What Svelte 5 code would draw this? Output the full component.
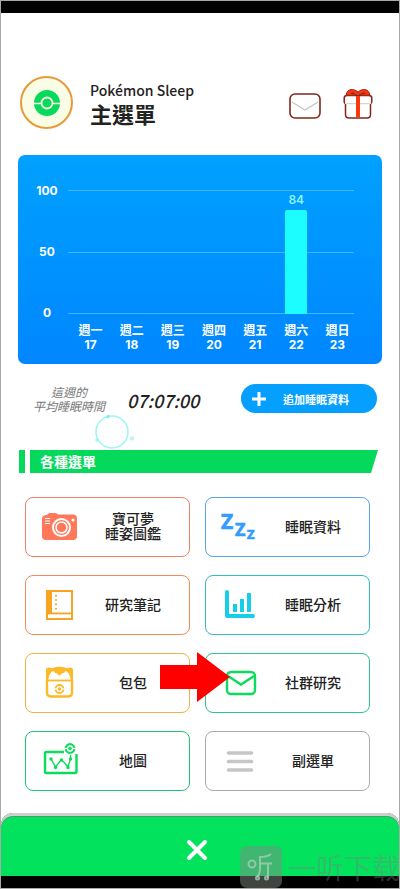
<script>
  const scale = [100, 50, 0];

  let days = [
    { name: '週一', date: 17, score: null },
    { name: '週二', date: 18, score: null },
    { name: '週三', date: 19, score: null },
    { name: '週四', date: 20, score: null },
    { name: '週五', date: 21, score: null },
    { name: '週六', date: 22, score: 84 },
    { name: '週日', date: 23, score: null }
  ];

  let averageTime = '07:07:00';

  const menu = [
    { id: 'dex', lines: ['寶可夢', '睡姿圖鑑'] },
    { id: 'data', lines: ['睡眠資料'] },
    { id: 'notes', lines: ['研究筆記'] },
    { id: 'analysis', lines: ['睡眠分析'] },
    { id: 'bag', lines: ['包包'] },
    { id: 'community', lines: ['社群研究'] },
    { id: 'map', lines: ['地圖'] },
    { id: 'sub', lines: ['副選單'] }
  ];
</script>

<div class="screen">
  <div class="system-bar"></div>

  <header>
    <div class="avatar">
      <svg width="28" height="28" viewBox="0 0 28 28">
        <circle cx="14" cy="14" r="13" fill="#08d95b" />
        <path d="M0 14.500h28" stroke="#fafde6" stroke-width="1.500" />
        <circle cx="14" cy="14" r="5.500" fill="#08d95b" stroke="#fafde6" stroke-width="1.800" />
      </svg>
    </div>
    <div class="titles">
      <p>Pokémon Sleep</p>
      <h1>主選單</h1>
    </div>
    <button class="icon-button" aria-label="Mail">
      <svg width="34" height="34" viewBox="0 0 34 34" fill="none">
        <rect x="2" y="6" width="30" height="24" rx="5" stroke="#80271c" stroke-width="1.6" />
        <path d="M4 14l13 8 13-8" stroke="#c8c4c2" stroke-width="1.3" />
      </svg>
    </button>
    <button class="icon-button" aria-label="Gifts">
      <svg width="34" height="34" viewBox="0 0 34 34" fill="none">
        <path d="M4.500 16v10.500q0 3.500 3.500 3.500h18q3.500 0 3.500-3.500V16" fill="#fff" stroke="#80271c" stroke-width="1.5" />
        <path d="M4 15.500q-.8-.5-.8-2V10q0-2.500 3-2.500h21.600q3 0 3 2.500v3.500q0 1.500-.8 2" fill="#fff" stroke="#80271c" stroke-width="1.5" />
        <path d="M4.500 15.700h25" stroke="#ccc" />
        <path d="M17 8v21" stroke="#fa380c" stroke-width="4" />
        <path d="M17 4C13 .5 6.500 0 5 7q6 1.500 12-1 6 2.500 12 1C27.500 0 21 .5 17 4z" fill="#fa380c" stroke="#a32612" />
        <path d="M9 5.500q3-2 5 0-2 1.500-5 0zM20 5.500q3-2 5 0-3 1.500-5 0z" fill="#8d2217" />
      </svg>
    </button>
  </header>

  <section class="chart">
    <div class="axis">
      {#each scale as value}
        <span>{value}</span>
      {/each}
    </div>
    <div class="plot">
      <div class="lines">
        {#each scale as value}
          <i></i>
        {/each}
      </div>
      <div class="bars">
        {#each days as day}
          <div class="slot">
            {#if day.score}
              <span>{day.score}</span>
              <div class="bar" style="height: {day.score}%"></div>
            {/if}
          </div>
        {/each}
      </div>
    </div>
    <div class="days">
      {#each days as day}
        <div>
          <span>{day.name}</span>
          <span>{day.date}</span>
        </div>
      {/each}
    </div>
  </section>

  <section class="summary">
    <p class="caption">這週的<br />平均睡眠時間</p>
    <strong>{averageTime}</strong>
    <button class="add">
      <svg width="14" height="14" viewBox="0 0 14 14">
        <path d="M7 0v14M0 7h14" stroke="#fff" stroke-width="3" />
      </svg>
      <span>追加睡眠資料</span>
    </button>
    <svg class="ripple" width="44" height="38" viewBox="0 0 44 38" fill="none">
      <circle cx="19" cy="19" r="16" stroke="#a0f3f4" stroke-width="1.500" />
      <circle cx="15" cy="3.500" r="1.700" fill="#7beef0" />
      <circle cx="4" cy="27" r="1.700" fill="#9ff4f4" />
      <circle cx="39" cy="25.500" r="2.300" fill="#c0f6f6" />
    </svg>
  </section>

  <h2><span>各種選單</span></h2>

  <nav>
    {#each menu as item}
      <button class="card {item.id}">
        <svg width="40" height="40" viewBox="0 0 40 40" fill="none" stroke="currentColor">
          {#if item.id === 'dex'}
            <path d="M7 8q1-2 3-2h5q2 0 3 1.500h15q4 0 4 4V29q0 4-4 4H6q-4 0-4-4V12q0-4 5-4z" fill="currentColor" stroke="none" />
            <path d="M5 11.500h5M5 14h5M5 16.500h5" stroke="#fff" stroke-width="1.200" />
            <circle cx="21.500" cy="20.500" r="8.500" stroke="#fff" stroke-width="2" />
            <circle cx="21.500" cy="20.500" r="5.500" stroke="#fff" stroke-width="1.500" />
            <circle cx="33" cy="13" r="1.600" fill="#fff" stroke="none" />
          {:else if item.id === 'data'}
            <g class="zzz" fill="currentColor" stroke-width="0.7">
              <text x="1" y="22" font-size="21">Z</text>
              <text x="15" y="29" font-size="18">Z</text>
              <text x="27" y="32" font-size="13">Z</text>
            </g>
          {:else if item.id === 'notes'}
            <rect x="7" y="6" width="25" height="28" stroke-width="2" />
            <path d="M9.500 5v24" stroke-width="5" />
            <path d="M7 28.500h25" stroke-width="2" />
            <path d="M8 31.200h23" stroke="#fff" stroke-width="3" />
            <path d="M16 10v17" stroke-width="2" stroke-dasharray="1.500 2.800" />
          {:else if item.id === 'analysis'}
            <path d="M7 7v24h26" stroke-width="4" stroke-linecap="round" stroke-linejoin="round" />
            <path d="M15 27v-8M22 27V14M29 27V8" stroke-width="4" />
          {:else if item.id === 'bag'}
            <path d="M6 15V7q0-3 3-2.500l5 1.500-7 9zM33 15V7q0-3-3-2.500l-5 1.500 7 9z" fill="currentColor" stroke="none" />
            <path d="M7 17Q8 5 19.500 5T32 17v12.500q0 4-4 4H11q-4 0-4-4z" fill="#fff" stroke-width="2.400" />
            <path d="M13 7q6.500-4 13 0l-2 3q-2-.5-2.500 1l-2 1.500-2-1.500q-.5-1.500-2.500-1z" fill="currentColor" stroke="none" />
            <path d="M7 17.500h25" stroke-width="1.800" />
            <circle cx="19.500" cy="26" r="4" stroke-width="1.800" />
            <path d="M13 26h13" stroke="#fff" stroke-width="1.200" />
            <circle cx="19.500" cy="26" r="1.700" fill="currentColor" stroke="none" />
          {:else if item.id === 'community'}
            <rect x="7" y="9" width="28" height="22" rx="4" stroke-width="2.400" />
            <path d="M8 13l13 8.500L34 13" stroke-width="2.400" />
          {:else if item.id === 'map'}
            <path d="M24 11H6.500q-1.500 0-1.500 1.500v18q0 1.500 1.500 1.500H35q1.500 0 1.500-1.500V13" stroke-width="2.400" />
            <path d="M11 18l4.500 8 6-7.500 6.500 7.500 2.500-8v-4" stroke-width="1.400" />
            <path d="M11 18h.01M15.500 26.500h.01M21.500 19h.01M28 26.500h.01M30.500 18h.01" stroke-width="3.400" stroke-linecap="round" />
            <circle cx="30" cy="7.500" r="6.500" fill="#fff" stroke="none" />
            <circle cx="30" cy="7.500" r="4.300" stroke-width="2.200" />
            <path d="M24 7.500h12" stroke="#fff" stroke-width="1.200" />
            <circle cx="30" cy="7.500" r="1.800" fill="currentColor" stroke="none" />
          {:else}
            <path d="M8.500 12h23M8.500 20.500h23M8.500 29h23" stroke-width="3.600" stroke-linecap="round" />
          {/if}
        </svg>
        <span class="label">
          {#each item.lines as line}
            <span>{line}</span>
          {/each}
        </span>
      </button>
    {/each}
    <svg class="arrow" width="70" height="50" viewBox="0 0 70 50">
      <path d="M0 13h37V0l33 25-33 25V37H0z" fill="#fe0000" />
    </svg>
  </nav>

  <footer>
    <button aria-label="Close">
      <svg width="22" height="22" viewBox="0 0 22 22">
        <path d="M3 3l16 16M19 3L3 19" stroke="#fff" stroke-width="4" stroke-linecap="round" />
      </svg>
    </button>
  </footer>
  <div class="system-bar"></div>

  <div class="watermark">
    <svg width="42" height="42" viewBox="0 0 42 42" fill="none" stroke="#a6cdb5" stroke-opacity="0.8" stroke-width="2">
      <rect width="42" height="42" rx="7" fill="#7f8a84" fill-opacity="0.5" stroke="none" />
      <circle cx="12" cy="18" r="3.500" />
      <path d="M31 8q-4 3-11 3v11q0 6-3 9M20 17.500h12M28 18v14" />
      <circle cx="17.500" cy="32" r="1.500" />
      <circle cx="26.500" cy="32" r="1.500" />
    </svg>
    <span>一听下载</span>
  </div>
</div>

<style>
  :global(body) {
    margin: 0;
    background: #fff;
  }

  .screen {
    position: relative;
    display: flex;
    flex-direction: column;
    box-sizing: border-box;
    min-height: 100vh;
    border: 1px solid #aaa;
    overflow: hidden;
    color: #222;
    font-family: "Noto Sans CJK TC", "Noto Sans", sans-serif;
  }

  button {
    padding: 0;
    border: 0;
    background: none;
    color: inherit;
    font: inherit;
    cursor: pointer;
  }

  svg {
    display: block;
    flex: none;
  }

  h1, h2, p {
    margin: 0;
  }

  .system-bar {
    height: 12px;
    background: #000;
  }

  header {
    display: flex;
    align-items: center;
    padding: 63px 24px 0 19px;
  }

  .avatar {
    display: flex;
    align-items: center;
    justify-content: center;
    box-sizing: border-box;
    width: 53px;
    height: 53px;
    border: 2px solid #e69a3a;
    border-radius: 50%;
    background: #fafde6;
  }

  .titles {
    flex: 1;
    padding: 0 0 2px 17px;
  }

  .titles p {
    font-size: 14px;
    font-weight: 500;
    line-height: 22px;
  }

  h1 {
    font-size: 22px;
    font-weight: 700;
    line-height: 24px;
  }

  .icon-button {
    margin: 4px 0 0 19px;
  }

  .chart {
    display: grid;
    grid-template-columns: 32px 1fr;
    column-gap: 5px;
    margin: 26px 17px 0;
    padding: 35px 24px 12px 13px;
    border-radius: 7px;
    background: linear-gradient(#00a1ff, #0086ff);
    color: #fff;
  }

  .axis {
    display: flex;
    flex-direction: column;
    justify-content: space-between;
    margin: -8px 0;
    font-family: Inter, sans-serif;
    font-size: 12px;
    font-weight: 700;
    line-height: 18px;
    text-align: center;
  }

  .plot {
    display: grid;
    height: 124px;
  }

  .lines, .bars {
    grid-area: 1 / 1;
  }

  .lines {
    display: flex;
    flex-direction: column;
    justify-content: space-between;
    margin-right: 4px;
  }

  .lines i {
    height: 1px;
    background: #45b6ff;
  }

  .bars, .days {
    display: grid;
    grid-template-columns: repeat(7, 1fr);
    padding-left: 2px;
  }

  .slot {
    display: flex;
    flex-direction: column;
    align-items: center;
    justify-content: flex-end;
    height: 124px;
    color: #8df6ff;
    font-family: Inter, sans-serif;
    font-size: 12px;
    font-weight: 600;
    line-height: 20px;
  }

  .bar {
    width: 22px;
    border-radius: 2px 2px 0 0;
    background: #1bfdff;
  }

  .days {
    grid-column: 2;
    margin-top: 8px;
    font-size: 12px;
    font-weight: 700;
    line-height: 15px;
    text-align: center;
  }

  .days span {
    display: block;
  }

  .days span + span {
    font-family: Inter, sans-serif;
  }

  .summary {
    position: relative;
    display: flex;
    align-items: center;
    padding: 20px 22px 0 32px;
  }

  .caption {
    color: #777;
    font-size: 12px;
    font-style: italic;
    line-height: 14px;
    text-align: center;
  }

  .summary strong {
    flex: 1;
    padding: 2px 0 0 22px;
    font-size: 18px;
    font-style: italic;
    font-weight: 500;
    line-height: 24px;
  }

  .add {
    display: flex;
    align-items: center;
    gap: 17px;
    height: 29px;
    padding: 0 28px 0 11px;
    border-radius: 15px;
    background: #059fff;
    color: #fff;
    font-size: 11px;
    font-weight: 700;
  }

  .ripple {
    position: absolute;
    top: 49px;
    left: 92px;
  }

  h2 {
    display: flex;
    gap: 5px;
    margin: 37px 21px 24px 18px;
    color: #fff;
    font-size: 14px;
    font-weight: 700;
    line-height: 23px;
  }

  h2::before {
    content: '';
    width: 6px;
    background: #04d95b;
  }

  h2 span {
    flex: 1;
    padding-left: 10px;
    background: #04d95b;
    clip-path: polygon(0 0, 100% 0, calc(100% - 7px) 100%, 0 100%);
  }

  nav {
    position: relative;
    display: grid;
    grid-template-columns: 1fr 1fr;
    gap: 18px 15px;
    margin: 0 29px 22px 24px;
  }

  .card {
    display: flex;
    align-items: center;
    box-sizing: border-box;
    min-height: 60px;
    padding-left: 14px;
    border: 1px solid;
    border-radius: 8px;
  }

  .label {
    flex: 1;
    padding: 0 3px 2px 0;
    color: #222;
    font-size: 14px;
    font-weight: 500;
    line-height: 15px;
  }

  .label span {
    display: block;
  }

  .zzz {
    font-family: "Noto Sans", sans-serif;
    font-weight: 700;
  }

  .dex { border-color: #ee8066; color: #ff785a; }
  .data { border-color: #55a4ee; color: #329dff; }
  .notes { border-color: #f58c55; color: #f9a323; }
  .analysis { border-color: #32bcc3; color: #16cdea; }
  .bag { border-color: #f3b244; color: #fdb926; }
  .community { border-color: #2dc58a; color: #0bdc5b; }
  .map { border-color: #1fc47b; color: #0bdc5b; }
  .sub { border-color: #aaa; color: #c6c6c6; }

  .arrow {
    position: absolute;
    top: 155px;
    left: 135px;
  }

  footer {
    display: flex;
    align-items: center;
    justify-content: center;
    box-sizing: border-box;
    min-height: 63px;
    margin-top: auto;
    padding: 11px 6px 0 0;
    border-radius: 12px 12px 0 0;
    background: #03e25c;
    box-shadow: inset 0 3px #d3cdd2, inset 0 4px #37a765;
  }

  .watermark {
    position: absolute;
    right: -1px;
    bottom: 0;
    display: flex;
    align-items: center;
    gap: 6px;
    color: rgba(120, 130, 125, 0.4);
    font-family: "Noto Sans CJK SC", sans-serif;
    font-size: 28px;
    line-height: 38px;
    white-space: nowrap;
  }
</style>
